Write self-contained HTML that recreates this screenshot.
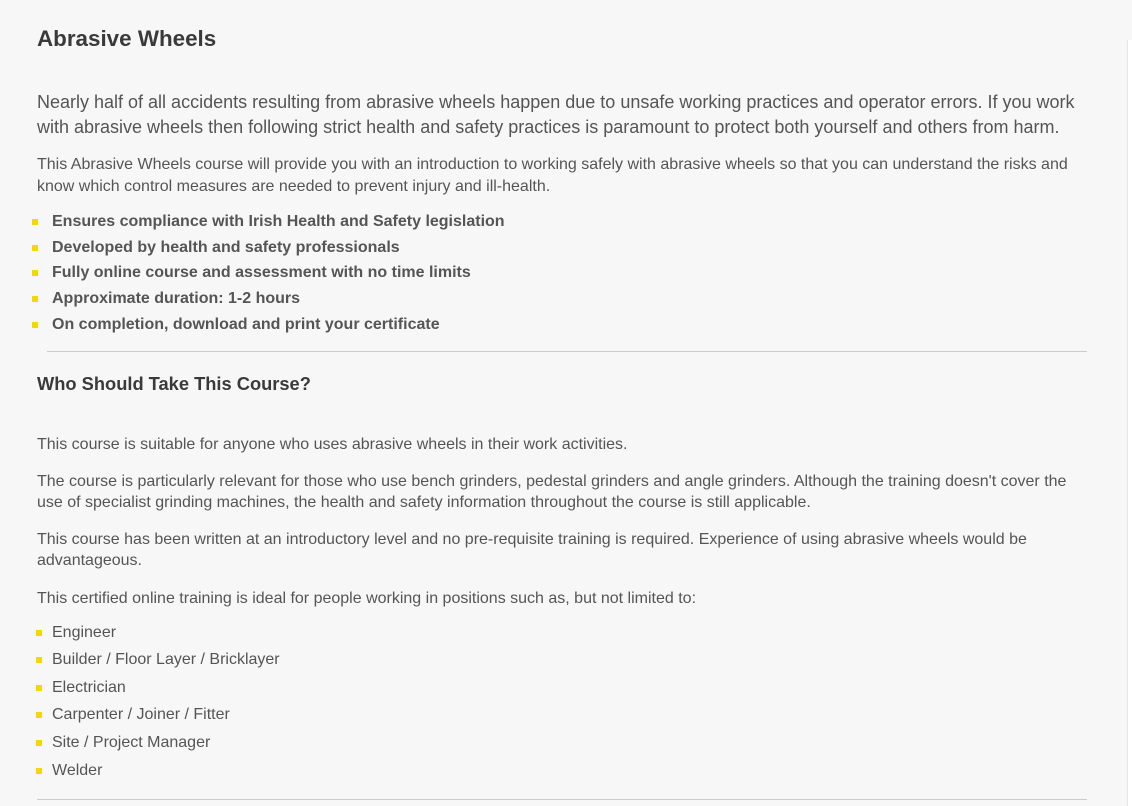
<!DOCTYPE html>
<html><head><style>
body{margin:0;width:1132px;height:806px;background:#f7f7f7;font-family:"Liberation Sans",Arial,sans-serif;color:#555;overflow:hidden;position:relative}
.a{position:absolute;left:37px;margin:0}
h1{font-size:22.4px;color:#3a3a3a;font-weight:bold}
.intro{font-size:18px;line-height:25px;width:1050px}
.p{font-size:16px;line-height:22px;width:1050px}
.q{font-size:16px;line-height:21px;width:1050px}
.li{position:absolute;left:52px;font-size:16px}
.li::before{content:"";position:absolute;left:-20px;top:6px;width:6px;height:6px;background:#f5d800}
.b{font-weight:bold;font-size:16px}
.l2::before{left:-16px}
hr{position:absolute;border:0;border-top:1px solid #ccc;margin:0}
</style></head><body>
<div style="position:absolute;left:1127px;top:40px;width:5px;height:766px;background:#fff;border-left:1px solid #e6e6e6"></div>
<h1 class="a" style="top:26px">Abrasive Wheels</h1>
<p class="a intro" style="top:90px">Nearly half of all accidents resulting from abrasive wheels happen due to unsafe working practices and operator errors. If you work with abrasive wheels then following strict health and safety practices is paramount to protect both yourself and others from harm.</p>
<p class="a p" style="top:154px">This Abrasive Wheels course will provide you with an introduction to working safely with abrasive wheels so that you can understand the risks and know which control measures are needed to prevent injury and ill-health.</p>
<div class="li b" style="top:213px">Ensures compliance with Irish Health and Safety legislation</div>
<div class="li b" style="top:239px">Developed by health and safety professionals</div>
<div class="li b" style="top:264px">Fully online course and assessment with no time limits</div>
<div class="li b" style="top:290px">Approximate duration: 1-2 hours</div>
<div class="li b" style="top:316px">On completion, download and print your certificate</div>
<hr style="left:47px;width:1040px;top:351px">
<div class="a" style="top:373px;font-size:18.3px;font-weight:bold;color:#3a3a3a">Who Should Take This Course?</div>
<p class="a q" style="top:434px">This course is suitable for anyone who uses abrasive wheels in their work activities.</p>
<p class="a q" style="top:471px">The course is particularly relevant for those who use bench grinders, pedestal grinders and angle grinders. Although the training doesn't cover the use of specialist grinding machines, the health and safety information throughout the course is still applicable.</p>
<p class="a q" style="top:529px">This course has been written at an introductory level and no pre-requisite training is required. Experience of using abrasive wheels would be advantageous.</p>
<p class="a q" style="top:588px">This certified online training is ideal for people working in positions such as, but not limited to:</p>
<div class="li l2" style="top:624px">Engineer</div>
<div class="li l2" style="top:651px">Builder / Floor Layer / Bricklayer</div>
<div class="li l2" style="top:679px">Electrician</div>
<div class="li l2" style="top:706px">Carpenter / Joiner / Fitter</div>
<div class="li l2" style="top:734px">Site / Project Manager</div>
<div class="li l2" style="top:762px">Welder</div>
<hr style="left:37px;width:1050px;top:799px">
</body></html>
